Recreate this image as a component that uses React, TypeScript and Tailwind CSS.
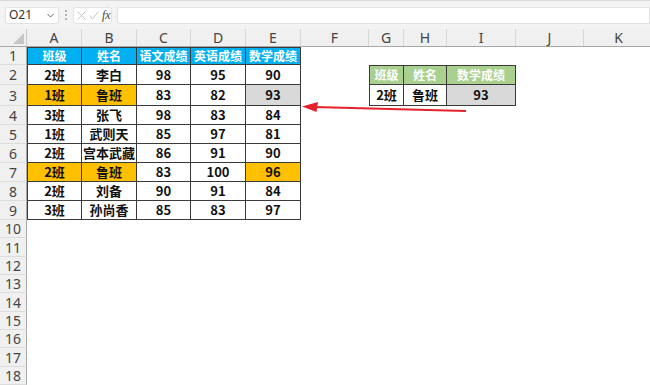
import React from "react";

const COLS = [
  { key: "A", w: 55 },
  { key: "B", w: 55 },
  { key: "C", w: 54 },
  { key: "D", w: 55 },
  { key: "E", w: 55 },
  { key: "F", w: 68 },
  { key: "G", w: 35 },
  { key: "H", w: 43 },
  { key: "I", w: 69 },
  { key: "J", w: 68 },
  { key: "K", w: 70 },
];

const ROW_H = [18, 20, 21, 19, 19, 19, 19, 19, 19, 18, 19, 18, 18, 19, 18, 18, 19, 18];

type Cell = { v: string; bg?: string; head?: boolean };

const O = "bg-[#ffc000]";
const GR = "bg-[#d9d9d9]";
const BLUE = "bg-[#00b0f0]";
const GREEN = "bg-[#a9d08e]";

const main: Cell[][] = [
  [
    { v: "班级", bg: BLUE, head: true },
    { v: "姓名", bg: BLUE, head: true },
    { v: "语文成绩", bg: BLUE, head: true },
    { v: "英语成绩", bg: BLUE, head: true },
    { v: "数学成绩", bg: BLUE, head: true },
  ],
  [{ v: "2班" }, { v: "李白" }, { v: "98" }, { v: "95" }, { v: "90" }],
  [{ v: "1班", bg: O }, { v: "鲁班", bg: O }, { v: "83" }, { v: "82" }, { v: "93", bg: GR }],
  [{ v: "3班" }, { v: "张飞" }, { v: "98" }, { v: "83" }, { v: "84" }],
  [{ v: "1班" }, { v: "武则天" }, { v: "85" }, { v: "97" }, { v: "81" }],
  [{ v: "2班" }, { v: "宫本武藏" }, { v: "86" }, { v: "91" }, { v: "90" }],
  [{ v: "2班", bg: O }, { v: "鲁班", bg: O }, { v: "83" }, { v: "100" }, { v: "96", bg: O }],
  [{ v: "2班" }, { v: "刘备" }, { v: "90" }, { v: "91" }, { v: "84" }],
  [{ v: "3班" }, { v: "孙尚香" }, { v: "85" }, { v: "83" }, { v: "97" }],
];

const lookup: Cell[][] = [
  [
    { v: "班级", bg: GREEN, head: true },
    { v: "姓名", bg: GREEN, head: true },
    { v: "数学成绩", bg: GREEN, head: true },
  ],
  [{ v: "2班" }, { v: "鲁班" }, { v: "93", bg: GR }],
];

function getCell(r: number, c: number) {
  // main table A1:E9
  if (r < 9 && c < 5) return { cell: main[r][c], top: r === 0, left: c === 0 };
  // lookup table G2:I3
  if (r >= 1 && r <= 2 && c >= 6 && c <= 8)
    return { cell: lookup[r - 1][c - 6], top: r === 1, left: c === 6 };
  return null;
}

function Toolbar() {
  return (
    <div className="h-[29px] bg-[#f3f3f3] border-t border-[#dadada] flex items-center pl-[5px] gap-[5px]">
      <div className="w-[54px] h-[17px] bg-white border border-[#e2e2e2] rounded-[3px] flex items-center justify-between pl-[3px] pr-[4px]">
        <span className="text-[12px] text-[#333] leading-none">O21</span>
        <svg width="7" height="5" viewBox="0 0 7 5">
          <path d="M0.5 1 L3.5 4 L6.5 1" fill="none" stroke="#666" strokeWidth="1" />
        </svg>
      </div>
      <div className="flex flex-col gap-[2px] px-[1px]">
        <span className="w-[2px] h-[2px] bg-[#b5b5b5]" />
        <span className="w-[2px] h-[2px] bg-[#b5b5b5]" />
        <span className="w-[2px] h-[2px] bg-[#b5b5b5]" />
      </div>
      <div className="w-[39px] h-[17px] bg-white border border-[#e2e2e2] rounded-[3px] flex items-center gap-[3px] pl-[3px]">
        <svg width="9" height="9" viewBox="0 0 9 9">
          <path d="M0.5 0.5 L8.5 8.5 M8.5 0.5 L0.5 8.5" stroke="#c4c4c4" strokeWidth="1" />
        </svg>
        <svg width="10" height="9" viewBox="0 0 10 9">
          <path d="M0.5 4.5 L3.5 8 L9.5 0.5" fill="none" stroke="#c4c4c4" strokeWidth="1" />
        </svg>
        <span className="text-[12px] italic text-[#444] leading-none" style={{ fontFamily: '"Liberation Serif", serif' }}>
          fx
        </span>
      </div>
      <div className="flex-1 h-[17px] bg-white border border-[#e2e2e2] rounded-l-[3px]" />
    </div>
  );
}

function ColumnHeaders() {
  return (
    <div className="flex h-[18px] bg-[#f0f0f0] border-b border-[#a8a8a8]">
      <div className="w-[27px] shrink-0 relative border-r border-[#c8c8c8]">
        <svg className="absolute right-[2px] bottom-[2px]" width="11" height="11" viewBox="0 0 11 11">
          <path d="M11 0 L11 11 L0 11 Z" fill="#c6c6c6" />
        </svg>
      </div>
      {COLS.map((c) => (
        <div
          key={c.key}
          style={{ width: c.w }}
          className="shrink-0 border-r border-[#d6d6d6] flex items-center justify-center text-[14px] text-[#444]"
        >
          {c.key}
        </div>
      ))}
    </div>
  );
}

export default function App() {
  return (
    <div className="w-[650px] h-[385px] overflow-hidden bg-white" style={{ fontFamily: '"Noto Sans", "Noto Sans CJK SC", sans-serif' }}>
      <Toolbar />
      <ColumnHeaders />
      <div className="relative">
        {ROW_H.map((h, r) => (
          <div key={r} className="flex" style={{ height: h }}>
            <div className="w-[27px] shrink-0 bg-[#f0f0f0] border-r border-[#a8a8a8] border-b border-b-[#dcdcdc] flex items-center justify-center text-[14px] text-[#444]">
              {r + 1}
            </div>
            {COLS.map((col, c) => {
              const info = getCell(r, c);
              if (!info) return <div key={col.key} style={{ width: col.w }} className="shrink-0" />;
              const { cell, top, left } = info;
              return (
                <div
                  key={col.key}
                  style={{ width: col.w }}
                  className={[
                    "shrink-0 flex items-center justify-center font-bold border-r border-b border-[#3a3a3a] whitespace-nowrap",
                    top ? "border-t" : "",
                    left ? "border-l" : "",
                    cell.bg ?? "bg-white",
                    cell.head ? "text-white text-[12px]" : "text-[#111] text-[13px]",
                  ].join(" ")}
                >
                  <span style={{ fontFamily: '"Noto Sans CJK SC", "Noto Sans", sans-serif' }}>{cell.v}</span>
                </div>
              );
            })}
          </div>
        ))}
        <svg className="absolute left-0 top-0 pointer-events-none" width="650" height="340">
          <path d="M466 64 L314 60" stroke="#e5212b" strokeWidth="2" fill="none" />
          <path d="M302 59.5 L318 55 L316.5 65 Z" fill="#e5212b" />
        </svg>
      </div>
    </div>
  );
}
